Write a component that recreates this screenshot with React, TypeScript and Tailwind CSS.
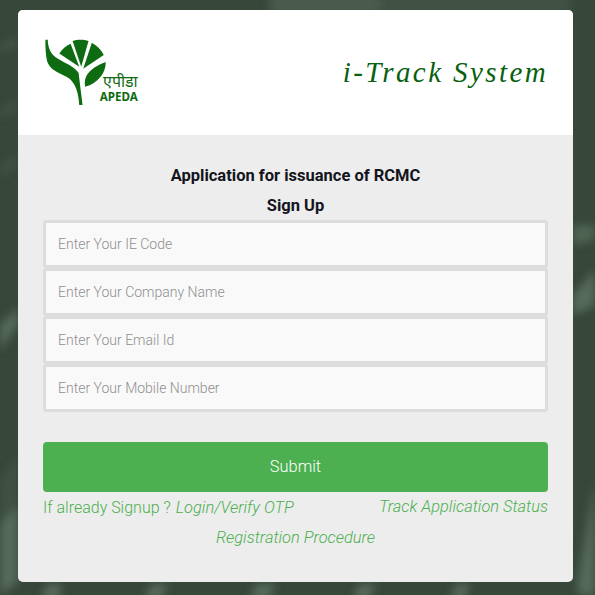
const fields = [
  "Enter Your IE Code",
  "Enter Your Company Name",
  "Enter Your Email Id",
  "Enter Your Mobile Number",
];

function Backdrop() {
  return (
    <svg className="absolute inset-0 w-full h-full" viewBox="0 0 595 595" preserveAspectRatio="none">
      <defs>
        <filter id="soft" x="-50%" y="-50%" width="200%" height="200%">
          <feGaussianBlur stdDeviation="4" />
        </filter>
      </defs>
      <rect width="595" height="595" fill="#37483b" />
      <g filter="url(#soft)" fill="#566a5b">
        <path d="M0 46 L18 38 L18 44 L0 52 Z" opacity="0.5" />
        <path d="M0 110 L18 100 L18 108 L0 118 Z" opacity="0.4" />
        <path d="M0 165 L18 155 L18 165 L0 178 Z" opacity="0.3" />
        <path d="M0 325 L18 308 L18 325 L0 350 Z" />
        <path d="M0 480 L18 455 L18 535 L0 545 Z" opacity="0.25" />
        <path d="M0 525 L18 505 L18 582 L0 595 Z" />
        <path d="M573 225 L595 225 L595 240 L573 245 Z" opacity="0.8" />
        <path d="M573 295 L595 270 L595 305 L573 315 Z" />
        <path d="M578 580 L595 480 L595 595 L578 595 Z" />
        <path d="M270 -6 L380 -6 L380 14 L270 14 Z" opacity="0.6" />
        <path d="M380 -6 L570 -6 L570 14 L380 14 Z" opacity="0.3" />
        <path d="M40 600 L48 584 L62 584 L58 600 Z" />
        <path d="M143 600 L152 584 L168 584 L160 600 Z" />
        <path d="M250 600 L256 584 L276 584 L268 600 Z" />
        <path d="M352 600 L360 584 L376 584 L368 600 Z" />
        <path d="M450 600 L456 584 L470 584 L464 600 Z" />
      </g>
    </svg>
  );
}

function Logo() {
  return (
    <svg width="97" height="68" viewBox="70 80 290 205" className="block -mt-[4px]">
      <g fill="#0f6b12">
        <path d="M76 88 L83 88 C84 110 90 128 108 142 C130 158 160 165 176 188 L188 285 L178 285 C176 250 168 222 148 205 C126 190 96 185 84 160 C78 146 76 120 76 88 Z" />
        <path d="M118 130 C126 116 138 106 152 100 L178 170 Z" />
        <path d="M158 92 C172 87 192 87 206 92 L184 170 Z" />
        <path d="M216 97 C232 106 244 118 252 134 L190 176 Z" />
        <path d="M258 155 C258 190 234 218 196 230 C190 200 205 175 258 155 Z" />
      </g>
      <text x="250" y="232" fontSize="48" fill="#0f6b12" fontFamily="'Noto Sans','Noto Sans Devanagari','DejaVu Sans',sans-serif">एपीडा</text>
      <text x="240" y="273" fontSize="35" fontWeight="700" fill="#0f6b12" fontFamily="'Noto Sans',sans-serif">APEDA</text>
    </svg>
  );
}

export default function App() {
  return (
    <main className="relative min-h-[595px] h-[595px] overflow-hidden font-['Roboto',sans-serif]">
      <Backdrop />
      <div className="relative ml-[18px] mt-[10px] w-[555px] h-[572px] rounded-[5px] overflow-hidden bg-[#ededed] inline-block align-top">
        <header className="h-[125px] bg-white flex items-center justify-between pl-[25px] pr-[25px]">
          <Logo />
          <h2 className="font-['Liberation_Serif',serif] italic text-[29px] text-[#0b5f10] tracking-[2.4px] mt-[1px]">
            i-Track System
          </h2>
        </header>
        <div className="px-[25px]">
          <h3 className="mt-[30px] text-center text-[16.5px] font-bold leading-[22px] text-[#14141c]">
            Application for issuance of RCMC
          </h3>
          <h3 className="mt-[8px] text-center text-[16.5px] font-bold leading-[22px] text-[#14141c]">Sign Up</h3>
          <div className="mt-[3px] flex flex-col">
            {fields.map((f) => (
              <input
                key={f}
                placeholder={f}
                className="block w-full h-[48px] px-3 border-[3px] border-[#dddddd] rounded-[3px] bg-[#f9f9f9] text-sm font-light outline-none placeholder:text-[#8f8f8f]"
              />
            ))}
          </div>
          <button className="mt-[30px] block w-full h-[50px] pt-[1px] rounded-[4px] bg-[#4caf50] text-white text-[16.4px] font-light">
            Submit
          </button>
          <div className="mt-[4px] flex justify-between text-[16.4px] font-light leading-[22px] text-[#4caf50]">
            <p>
              <span className="text-base">If already Signup ?</span> <a className="italic ml-[1px]">Login/Verify OTP</a>
            </p>
            <a className="italic">Track Application Status</a>
          </div>
          <p className="mt-[7px] text-center text-[16.4px] font-light italic leading-[22px] text-[#4caf50]">
            Registration Procedure
          </p>
        </div>
      </div>
    </main>
  );
}
